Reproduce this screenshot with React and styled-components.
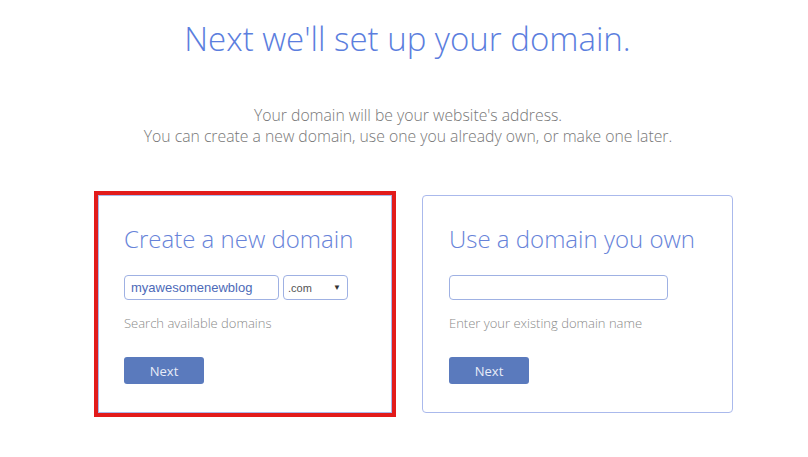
import styled, { createGlobalStyle } from "styled-components";

const GlobalStyle = createGlobalStyle`
    * { box-sizing: border-box; }
    body {
        margin: 0;
        background: #FFFFFF;
        font-family: 'Open Sans', 'Liberation Sans', sans-serif;
    }
`;

export default function App () {
    return (
        <Page>
            <GlobalStyle />
            <Title>Next we'll set up your domain.</Title>
            <Intro>
                Your domain will be your website's address.<br />
                You can create a new domain, use one you already own, or make one later.
            </Intro>
            <Cards>
                <Card $width={294} $highlight>
                    <CardTitle>Create a new domain</CardTitle>
                    <Fields>
                        <TextInput $width={155} defaultValue="myawesomenewblog" />
                        <Select>
                            <span>.com</span>
                            <Arrow>▼</Arrow>
                        </Select>
                    </Fields>
                    <Hint>Search available domains</Hint>
                    <Button>Next</Button>
                </Card>
                <Card $width={311}>
                    <CardTitle>Use a domain you own</CardTitle>
                    <Fields>
                        <TextInput $width={219} />
                    </Fields>
                    <Hint>Enter your existing domain name</Hint>
                    <Button>Next</Button>
                </Card>
            </Cards>
        </Page>
    )
}

const Page = styled.div`
    width: 808px;
    height: 457px;
    overflow: hidden;
    padding-top: 19px;
`;

const Title = styled.h1`
    margin: 0;
    text-align: center;
    font-weight: 300;
    font-size: 33px;
    line-height: 40px;
    color: #5b7ede;
    padding-left: 7px;
`;

const Intro = styled.p`
    margin: 46px 0 0 0;
    text-align: center;
    font-weight: 300;
    font-size: 15.75px;
    line-height: 21px;
    color: #777777;
    padding-left: 8px;
`;

const Cards = styled.div`
    display: flex;
    align-items: flex-start;
    gap: 30px;
    margin-top: 48px;
    padding-left: 98px;
`;

const Card = styled.div`
    width: ${(p) => p.$width}px;
    height: 218px;
    padding: ${(p) => (p.$highlight ? "28px 0 0 25px" : "28px 0 0 26px")};
    border: 1px solid #aab9ec;
    border-radius: ${(p) => (p.$highlight ? "0" : "4px")};
    display: flex;
    flex-direction: column;
    align-items: flex-start;
    box-shadow: ${(p) => (p.$highlight ? "0 0 0 4px #e21b1b" : "none")};
`;

const CardTitle = styled.h2`
    margin: 0;
    font-weight: 300;
    font-size: 24px;
    line-height: 29px;
    color: #6783d9;
    white-space: nowrap;
`;

const Fields = styled.div`
    display: flex;
    gap: 4px;
    margin-top: 22px;
`;

const TextInput = styled.input`
    width: ${(p) => p.$width}px;
    height: 25px;
    border: 1px solid #9fb1e3;
    border-radius: 4px;
    padding: 0 6px;
    font-family: 'Liberation Sans', Arial, sans-serif;
    font-size: 13px;
    color: #4d6ab8;
    outline: none;
`;

const Select = styled.div`
    width: 65px;
    height: 25px;
    border: 1px solid #9fb1e3;
    border-radius: 4px;
    padding: 0 6px 0 4px;
    display: flex;
    align-items: center;
    justify-content: space-between;
    font-family: 'Liberation Sans', Arial, sans-serif;
    font-size: 11px;
    color: #555555;
`;

const Arrow = styled.span`
    font-size: 8px;
    color: #333333;
`;

const Hint = styled.p`
    margin: 14px 0 0 0;
    font-weight: 300;
    font-size: 13px;
    line-height: 18px;
    color: #8a8a8a;
`;

const Button = styled.button`
    margin-top: 25px;
    width: 80px;
    height: 27px;
    border: none;
    border-radius: 3px;
    background: #5a7abd;
    color: #e8ecf8;
    font-family: 'Open Sans', 'Liberation Sans', sans-serif;
    font-size: 13px;
    cursor: pointer;
`;
